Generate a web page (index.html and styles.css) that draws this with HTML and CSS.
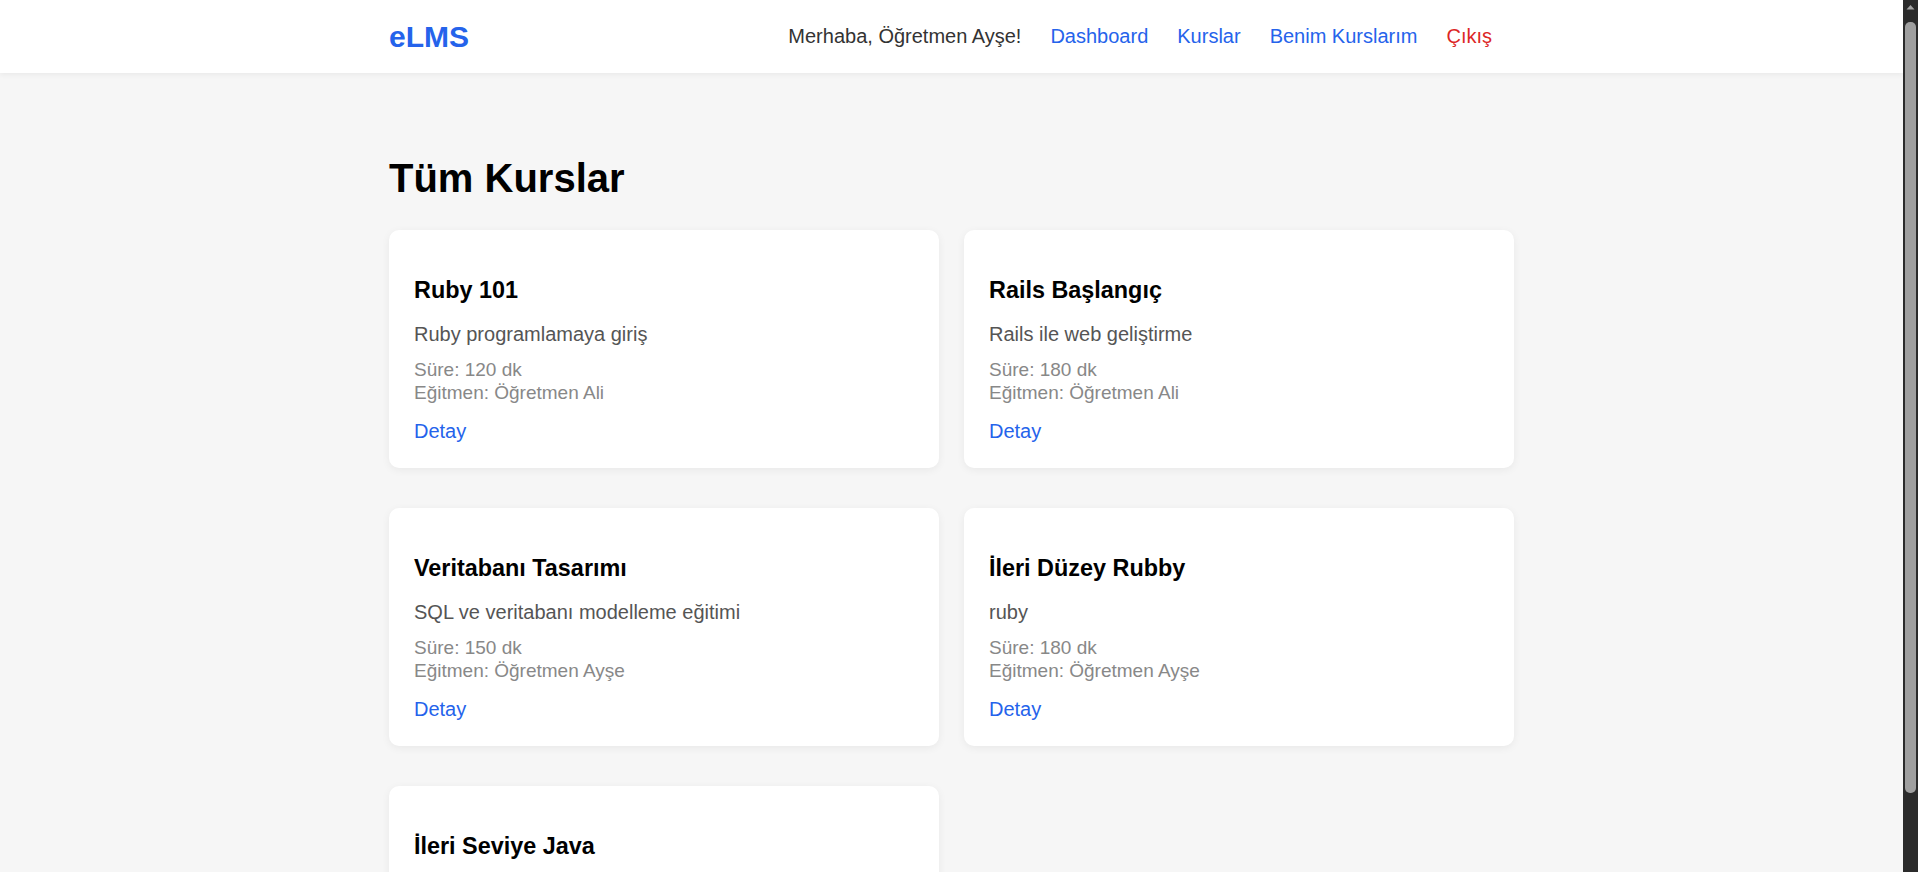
FILE: index.html
```html
<!DOCTYPE html>
<html lang="tr">
<head>
<meta charset="utf-8">
<title>eLMS - Tüm Kurslar</title>
<link rel="stylesheet" href="styles.css">
</head>
<body>
<header class="topbar">
  <div class="container topbar-inner">
    <a class="logo" href="#">eLMS</a>
    <nav class="nav">
      <span class="greeting">Merhaba, Öğretmen Ayşe!</span>
      <a class="nav-link" href="#">Dashboard</a>
      <a class="nav-link" href="#">Kurslar</a>
      <a class="nav-link" href="#">Benim Kurslarım</a>
      <a class="nav-link nav-logout" href="#">Çıkış</a>
    </nav>
  </div>
</header>
<main class="container main">
  <h1 class="page-title">Tüm Kurslar</h1>
  <div class="course-grid">
    <div class="card">
      <h3 class="card-title">Ruby 101</h3>
      <p class="card-desc">Ruby programlamaya giriş</p>
      <p class="card-meta">Süre: 120 dk<br>Eğitmen: Öğretmen Ali</p>
      <a class="card-link" href="#">Detay</a>
    </div>
    <div class="card">
      <h3 class="card-title">Rails Başlangıç</h3>
      <p class="card-desc">Rails ile web geliştirme</p>
      <p class="card-meta">Süre: 180 dk<br>Eğitmen: Öğretmen Ali</p>
      <a class="card-link" href="#">Detay</a>
    </div>
    <div class="card">
      <h3 class="card-title">Veritabanı Tasarımı</h3>
      <p class="card-desc">SQL ve veritabanı modelleme eğitimi</p>
      <p class="card-meta">Süre: 150 dk<br>Eğitmen: Öğretmen Ayşe</p>
      <a class="card-link" href="#">Detay</a>
    </div>
    <div class="card">
      <h3 class="card-title">İleri Düzey Rubby</h3>
      <p class="card-desc">ruby</p>
      <p class="card-meta">Süre: 180 dk<br>Eğitmen: Öğretmen Ayşe</p>
      <a class="card-link" href="#">Detay</a>
    </div>
    <div class="card">
      <h3 class="card-title">İleri Seviye Java</h3>
      <p class="card-desc">Java ile ileri seviye programlama</p>
      <p class="card-meta">Süre: 200 dk<br>Eğitmen: Öğretmen Ayşe</p>
      <a class="card-link" href="#">Detay</a>
    </div>
  </div>
</main>
<div class="scrollbar" aria-hidden="true">
  <svg class="scroll-arrow" width="15" height="15" viewBox="0 0 15 15"><path d="M3.5 9.5 L7.5 5 L11.5 9.5 Z" fill="#a3a3a3"/></svg>
  <div class="scroll-thumb"></div>
</div>
</body>
</html>
```
FILE: styles.css
```css
html {
  background: #f6f6f6;
}
body {
  margin: 0 15px 0 0;
  background: #f6f6f6;
  font-family: "Liberation Sans", Arial, sans-serif;
  font-size: 20px;
  color: #222;
}
a {
  text-decoration: none;
}
.container {
  max-width: 1125px;
  margin: 0 auto;
}
.topbar {
  background: #fff;
  height: 73px;
  box-shadow: 0 2px 5px rgba(0, 0, 0, 0.05);
}
.topbar-inner {
  height: 100%;
  display: flex;
  align-items: center;
  justify-content: space-between;
}
.logo {
  color: #2563eb;
  font-weight: bold;
  font-size: 30px;
}
.nav {
  display: flex;
  align-items: center;
  gap: 29px;
  margin-right: 22px;
}
.greeting {
  color: #333;
}
.nav-link {
  color: #2563eb;
}
.nav-logout {
  color: #dc2626;
}
.main {
  padding: 83px 0 40px;
}
.page-title {
  margin: 0 0 29px;
  font-size: 40px;
  color: #000;
}
.course-grid {
  display: grid;
  grid-template-columns: 1fr 1fr;
  column-gap: 25px;
  row-gap: 40px;
}
.card {
  background: #fff;
  border-radius: 10px;
  padding: 25px;
  box-shadow: 0 2px 8px rgba(0, 0, 0, 0.06);
}
.card-title {
  margin: 22px 0 19px;
  font-size: 23.4px;
  color: #000;
}
.card-desc {
  margin: 0 0 12px;
  line-height: 23px;
  color: #555;
}
.card-meta {
  margin: 0 0 16px;
  font-size: 19px;
  line-height: 23px;
  color: #888;
}
.card-link {
  display: block;
  line-height: 23px;
  color: #2563eb;
}
.scrollbar {
  position: fixed;
  top: 0;
  right: 0;
  width: 15px;
  height: 100vh;
  background: #2b2b2b;
}
.scroll-arrow {
  display: block;
}
.scroll-thumb {
  position: absolute;
  top: 22px;
  left: 2px;
  width: 11px;
  height: 771px;
  border-radius: 5px;
  background: #9f9f9f;
}
```
